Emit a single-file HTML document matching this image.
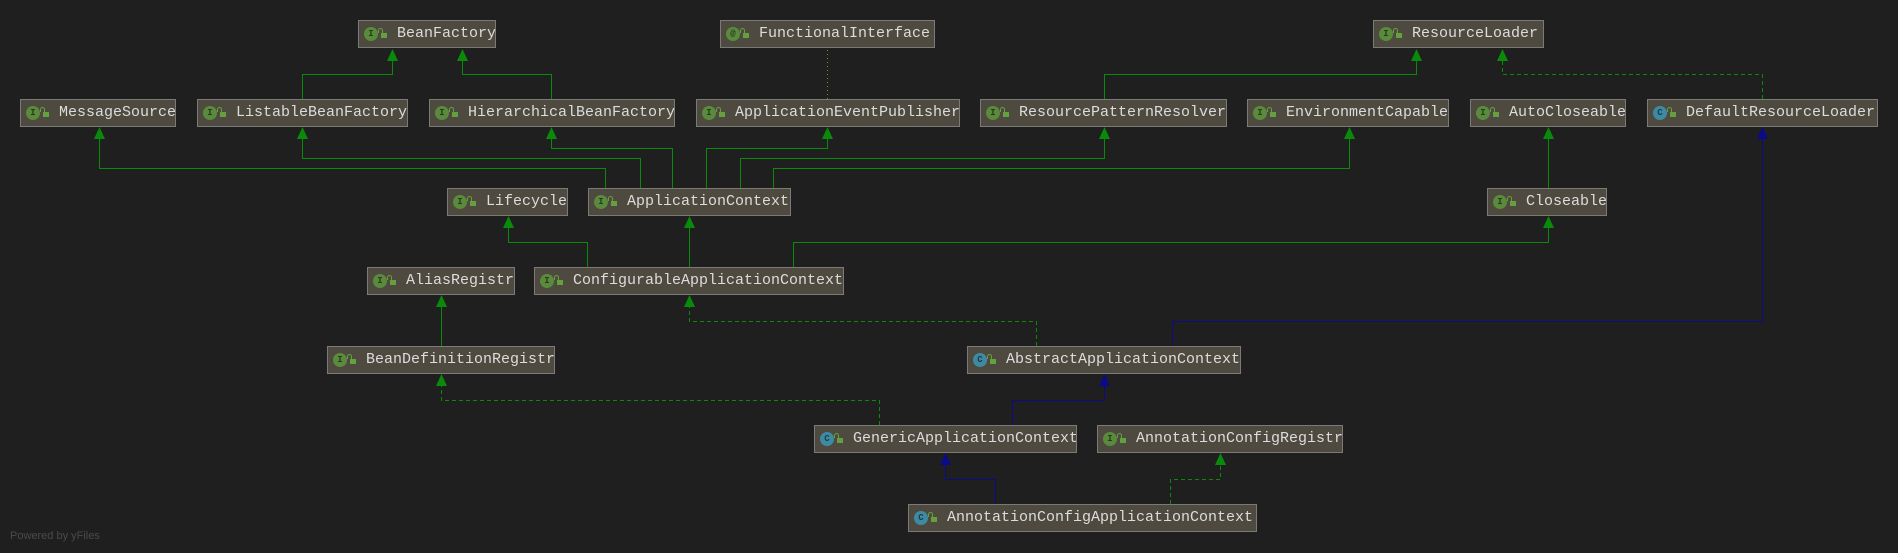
<!DOCTYPE html>
<html><head><meta charset="utf-8"><style>
html,body{margin:0;padding:0;background:#1f1f1f;width:1898px;height:553px;overflow:hidden;position:relative}
.b{position:absolute;height:28px;box-sizing:border-box;background:#4e4a40;border:1px solid #7a7a78;overflow:hidden;white-space:nowrap}
.b .ic{position:absolute;left:5px;top:6px;width:14px;height:14px;border-radius:50%;background:#5a8a3c;color:#2a3a20;font:bold 9px "Liberation Mono",monospace;text-align:center;line-height:14px}
.b .ic.c{background:#3f8aa3;color:#1d3c48}
.b .lk{position:absolute;left:22px;top:12px;width:6px;height:5px;background:#64a03e}
.b .lk:before{content:"";position:absolute;left:-3px;top:-5px;width:3px;height:4px;border:1.5px solid #64a03e;border-bottom:none;border-radius:3px 3px 0 0}
.b .t{position:absolute;left:38px;top:4px;font:15px "Liberation Mono",monospace;color:#dcdcdc;letter-spacing:0}
.pw{position:absolute;left:10px;top:530px;font:11px "Liberation Sans",sans-serif;color:#4a4a4a}
svg{position:absolute;left:0;top:0}
</style></head><body>
<svg width="1898" height="553" fill="none" stroke-width="1">
<g stroke="#0a8a0a">
<path d="M302.5 99V74.5H392.5V52M551.5 99V74.5H462.5V52"/>
<path d="M605.5 188V168.5H99.5V130M640.5 188V158.5H302.5V130M672.5 188V148.5H551.5V130"/>
<path d="M706.5 188V148.5H827.5V130M740.5 188V158.5H1104.5V130M773.5 188V168.5H1349.5V130"/>
<path d="M1104.5 99V74.5H1416.5V52M1548.5 188V130"/>
<path d="M587.5 267V242.5H508.5V219M689.5 267V219M793.5 267V242.5H1548.5V219"/>
<path d="M441.5 346V298"/>
</g>
<g stroke="#0a8a0a" stroke-dasharray="4,3">
<path d="M1762.5 99V74.5H1502.5V52"/>
<path d="M1036.5 346V321.5H689.5V298"/>
<path d="M879.5 425V400.5H441.5V377"/>
<path d="M1170.5 504V479.5H1220.5V456"/>
</g>
<path d="M827.5 50V99" stroke="#8a8a20" stroke-dasharray="1,3"/>
<g stroke="#0a0a8a">
<path d="M1172.5 346V321.5H1762.5V130"/>
<path d="M1012.5 425V400.5H1104.5V377"/>
<path d="M995.5 504V479.5H945.5V456"/>
</g>
<g fill="#0a8a0a" stroke="none">
<path d="M392.5 49l-5.5 12h11zM462.5 49l-5.5 12h11zM1416.5 49l-5.5 12h11zM1502.5 49l-5.5 12h11z"/>
<path d="M99.5 127l-5.5 12h11zM302.5 127l-5.5 12h11zM551.5 127l-5.5 12h11zM827.5 127l-5.5 12h11zM1104.5 127l-5.5 12h11zM1349.5 127l-5.5 12h11zM1548.5 127l-5.5 12h11z"/>
<path d="M508.5 216l-5.5 12h11zM689.5 216l-5.5 12h11zM1548.5 216l-5.5 12h11z"/>
<path d="M441.5 295l-5.5 12h11zM689.5 295l-5.5 12h11zM441.5 374l-5.5 12h11zM1220.5 453l-5.5 12h11z"/>
</g>
<g fill="#0a0a8a" stroke="none">
<path d="M1762.5 127l-5.5 12h11zM1104.5 374l-5.5 12h11zM945.5 453l-5.5 12h11z"/>
</g>
</svg>

<div class="b" style="left:358px;top:20px;width:138px"><span class="ic">I</span><span class="lk"></span><span class="t">BeanFactory</span></div>
<div class="b" style="left:720px;top:20px;width:215px"><span class="ic">@</span><span class="lk"></span><span class="t">FunctionalInterface</span></div>
<div class="b" style="left:1373px;top:20px;width:171px"><span class="ic">I</span><span class="lk"></span><span class="t">ResourceLoader</span></div>

<div class="b" style="left:20px;top:99px;width:156px"><span class="ic">I</span><span class="lk"></span><span class="t">MessageSource</span></div>
<div class="b" style="left:197px;top:99px;width:211px"><span class="ic">I</span><span class="lk"></span><span class="t">ListableBeanFactory</span></div>
<div class="b" style="left:429px;top:99px;width:246px"><span class="ic">I</span><span class="lk"></span><span class="t">HierarchicalBeanFactory</span></div>
<div class="b" style="left:696px;top:99px;width:264px"><span class="ic">I</span><span class="lk"></span><span class="t">ApplicationEventPublisher</span></div>
<div class="b" style="left:980px;top:99px;width:247px"><span class="ic">I</span><span class="lk"></span><span class="t">ResourcePatternResolver</span></div>
<div class="b" style="left:1247px;top:99px;width:202px"><span class="ic">I</span><span class="lk"></span><span class="t">EnvironmentCapable</span></div>
<div class="b" style="left:1470px;top:99px;width:156px"><span class="ic">I</span><span class="lk"></span><span class="t">AutoCloseable</span></div>
<div class="b" style="left:1647px;top:99px;width:231px"><span class="ic c">C</span><span class="lk"></span><span class="t">DefaultResourceLoader</span></div>

<div class="b" style="left:447px;top:188px;width:121px"><span class="ic">I</span><span class="lk"></span><span class="t">Lifecycle</span></div>
<div class="b" style="left:588px;top:188px;width:203px"><span class="ic">I</span><span class="lk"></span><span class="t">ApplicationContext</span></div>
<div class="b" style="left:1487px;top:188px;width:120px"><span class="ic">I</span><span class="lk"></span><span class="t">Closeable</span></div>

<div class="b" style="left:367px;top:267px;width:148px"><span class="ic">I</span><span class="lk"></span><span class="t">AliasRegistry</span></div>
<div class="b" style="left:534px;top:267px;width:310px"><span class="ic">I</span><span class="lk"></span><span class="t">ConfigurableApplicationContext</span></div>

<div class="b" style="left:327px;top:346px;width:228px"><span class="ic">I</span><span class="lk"></span><span class="t">BeanDefinitionRegistry</span></div>
<div class="b" style="left:967px;top:346px;width:274px"><span class="ic c">C</span><span class="lk"></span><span class="t">AbstractApplicationContext</span></div>

<div class="b" style="left:814px;top:425px;width:263px"><span class="ic c">C</span><span class="lk"></span><span class="t">GenericApplicationContext</span></div>
<div class="b" style="left:1097px;top:425px;width:246px"><span class="ic">I</span><span class="lk"></span><span class="t">AnnotationConfigRegistry</span></div>

<div class="b" style="left:908px;top:504px;width:349px"><span class="ic c">C</span><span class="lk"></span><span class="t">AnnotationConfigApplicationContext</span></div>

<div class="pw">Powered by yFiles</div>
</body></html>
